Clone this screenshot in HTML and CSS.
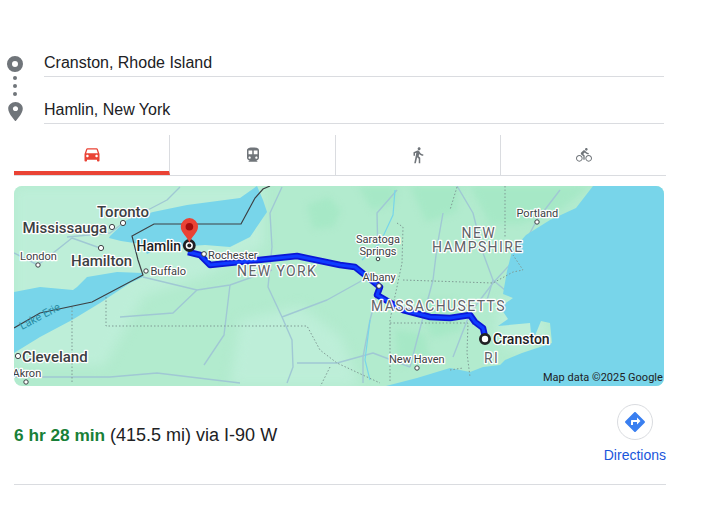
FILE: index.html
```html
<!DOCTYPE html>
<html lang="en">
<head>
  <meta charset="UTF-8" />
  <meta name="viewport" content="width=device-width, initial-scale=1.0" />
  <title>Cranston to Hamlin</title>
  <link rel="stylesheet" href="styles.css">
</head>
<body>
  <div class="route">
    <div class="route-icons">
      <span class="ring"></span>
      <span class="dot"></span>
      <span class="dot"></span>
      <span class="dot"></span>
      <svg class="pin" viewBox="0 0 24 24" preserveAspectRatio="none"><path d="M12 2C8.13 2 5 5.13 5 9c0 5.25 7 13 7 13s7-7.75 7-13c0-3.87-3.13-7-7-7zm0 9.5c-1.38 0-2.5-1.12-2.5-2.5s1.12-2.5 2.5-2.5 2.5 1.12 2.5 2.5-1.12 2.5-2.5 2.5z"/></svg>
    </div>
    <div class="route-fields">
      <div class="field">Cranston, Rhode Island</div>
      <div class="field">Hamlin, New York</div>
    </div>
  </div>

  <div class="tabs">
    <div class="tab active">
      <svg class="tab-icon" viewBox="0 0 24 24"><path d="M18.92 6.01C18.72 5.42 18.16 5 17.5 5h-11c-.66 0-1.21.42-1.42 1.01L3 12v8c0 .55.45 1 1 1h1c.55 0 1-.45 1-1v-1h12v1c0 .55.45 1 1 1h1c.55 0 1-.45 1-1v-8l-2.08-5.99zM6.5 16c-.83 0-1.5-.67-1.5-1.5S5.67 13 6.5 13s1.5.67 1.5 1.5S7.33 16 6.5 16zm11 0c-.83 0-1.5-.67-1.5-1.5s.67-1.5 1.5-1.5 1.5.67 1.5 1.5-.67 1.5-1.5 1.5zM5 11l1.5-4.5h11L19 11H5z"/></svg>
    </div>
    <div class="tab">
      <svg class="tab-icon" viewBox="0 0 24 24"><path d="M12 2c-4.42 0-8 .5-8 4v9.5C4 17.43 5.57 19 7.5 19L6 20.5v.5h12v-.5L16.5 19c1.93 0 3.5-1.57 3.5-3.5V6c0-3.5-3.58-4-8-4zM7.5 17c-.83 0-1.5-.67-1.5-1.5S6.67 14 7.5 14s1.5.67 1.5 1.5S8.33 17 7.5 17zm3.5-6H6V6h5v5zm5.5 6c-.83 0-1.5-.67-1.5-1.5s.67-1.5 1.5-1.5 1.5.67 1.5 1.5-.67 1.5-1.5 1.5zm1.5-6h-5V6h5v5z"/></svg>
    </div>
    <div class="tab">
      <svg class="tab-icon" viewBox="0 0 24 24"><path d="M13.5 5.5c1.1 0 2-.9 2-2s-.9-2-2-2-2 .9-2 2 .9 2 2 2zM9.8 8.9L7 23h2.1l1.8-8 2.1 2v6h2v-7.5l-2.1-2 .6-3C14.8 12 16.8 13 19 13v-2c-1.9 0-3.5-1-4.3-2.4l-1-1.6c-.4-.6-1-1-1.7-1-.3 0-.5.1-.8.1L6 8.3V13h2V9.6l1.8-.7"/></svg>
    </div>
    <div class="tab">
      <svg class="tab-icon bike" viewBox="0 0 24 24"><path d="M15.5 5.5c1.1 0 2-.9 2-2s-.9-2-2-2-2 .9-2 2 .9 2 2 2zM5 12c-2.8 0-5 2.2-5 5s2.2 5 5 5 5-2.2 5-5-2.2-5-5-5zm0 8.5c-1.9 0-3.5-1.6-3.5-3.5s1.6-3.5 3.5-3.5 3.5 1.6 3.5 3.5-1.6 3.5-3.5 3.5zm5.8-10l2.4-2.4.8.8c1.3 1.3 3 2.1 5.1 2.1V9c-1.5 0-2.7-.6-3.6-1.5l-1.9-1.9c-.5-.4-1-.6-1.6-.6s-1.1.2-1.4.6L7.8 8.4c-.4.4-.6.9-.6 1.4 0 .6.2 1.1.6 1.4L11 14v5h2v-6.2l-2.2-2.3zM19 12c-2.8 0-5 2.2-5 5s2.2 5 5 5 5-2.2 5-5-2.2-5-5-5zm0 8.5c-1.9 0-3.5-1.6-3.5-3.5s1.6-3.5 3.5-3.5 3.5 1.6 3.5 3.5-1.6 3.5-3.5 3.5z"/></svg>
    </div>
  </div>

  <!-- map drawn in page coordinates, hence the viewBox offset -->
  <svg class="map" viewBox="14 186 650 200">
    <rect class="land" x="14" y="186" width="650" height="200"/>

    <g class="land-light">
      <path d="M14 186h250v60l-60 30-60 20-40 70H14z"/>
      <path d="M240 320l60-14 40 30 20 50H230z"/>
      <path d="M500 300l30-6 20 40-30 20-24-14z"/>
    </g>
    <g class="land-dark">
      <path d="M307 205l22-8 12 14-8 16-20 2z"/>
      <path d="M358 186h40l-4 18-22 6z"/>
      <path d="M410 186h50l-4 26-30 10z"/>
      <path d="M470 186h120l-30 24-40 14-30 0z"/>
      <path d="M420 300l36 0 6 30-30 8z"/>
      <path d="M395 330l30 4 4 26-30 6z"/>
    </g>

    <g class="roads">
      <path d="M282 187l-12 26 2 34-4 40 14 30 10 23 1 27-6 16"/>
      <path d="M282 317l45-17 36-20"/>
      <path d="M397 190l-20 23 1 44"/>
      <path d="M378 290l-8 30-7 37v26"/>
      <path d="M297 363h40l36-10 37 14"/>
      <path d="M443 213l-6 34-4 33-16 60-7 27"/>
      <path d="M457 186l16 27 10 40 10 27-6 20"/>
      <path d="M560 190l-23 30-20 37-24 26-23 30-17 44"/>
      <path d="M493 280l20 17"/>
      <path d="M14 253l24 12 34-27 28 10"/>
      <path d="M67 237l43-4 13-10 44-23 13-13"/>
      <path d="M14 377h96l47-4 83 10"/>
      <path d="M197 290l-24 23-53 4"/>
      <path d="M143 277l54 13 33-5 42-15"/>
      <path d="M230 285l-6 50-20 30"/>
    </g>

    <path class="water" d="M110 236l17-16 26-8 34-7 53-7 17-12 6 14 4 12-17 25-20 10-25-2-30 2-20 3-8 4-6-10-20-3-12-3z"/>
    <path class="water" d="M14 292l26-5 33 3 4-3 10-10 30-5 26 1v4l-13 6-30 20-28 17-32 17-26 16z"/>
    <path class="water" d="M593 186h71v200H386l31-8 33-10 20 4 13-5 17-2 5-5 17-7 30-10-2-20-9-2-9 22-2-20-32 3 10-7-8-12 13-9-10-4 4-23 5-20 14-16 24-15 26-12z"/>
    <path class="water-line" d="M395 190l-2 25-13 28-18 17"/>
    <path class="water-line" d="M370 320l-5 40 5 20"/>
    <path class="water-line" d="M14 300l14-8"/>

    <g class="border">
      <path d="M14 328l26-15 52-11 51-27-5-15-6-24 22-12h87l14-26 8-9 7-3"/>
    </g>
    <g class="state-line">
      <path d="M72 307v76"/>
      <path d="M106 297v29h201l13 24 17 13 43 20"/>
      <path d="M397 223l6 4-1 36-12 57v63"/>
      <path d="M403 280l90 3 20-11 10-2-10-15"/>
      <path d="M390 323l78 0-1 30 3 24"/>
      <path d="M505 186v51"/>
      <path d="M457 187l-7 23"/>
      <path d="M330 367l-10 20M450 370l13-2"/>
    </g>

    <path class="route-outer" d="M188 252l12 3 10 10 87-9 43 9 15 2 25 20-3 8 26 15 27 7 20 1 20-3 5 7 8 6 2 9"/>
    <path class="route-inner" d="M188 252l12 3 10 10 87-9 43 9 15 2 25 20-3 8 26 15 27 7 20 1 20-3 5 7 8 6 2 9"/>

    <g class="places">
      <circle cx="123" cy="223" r="2.6"/>
      <circle cx="112" cy="227" r="2.6"/>
      <circle cx="101" cy="248" r="2.6"/>
      <circle cx="38" cy="265" r="2.2"/>
      <circle cx="146" cy="271" r="2.2"/>
      <circle cx="18" cy="356" r="2.6"/>
      <circle cx="26" cy="382" r="2.2"/>
      <circle cx="204" cy="254" r="2.4"/>
      <circle cx="378" cy="259" r="1.8"/>
      <circle cx="379" cy="286" r="2.4"/>
      <circle cx="417" cy="368" r="2.2"/>
      <circle cx="537" cy="222" r="2.2"/>
    </g>

    <circle class="stop" cx="189.3" cy="245.5" r="5"/>
    <circle class="stop-center" cx="189.3" cy="245.5" r="2"/>
    <circle class="stop" cx="485" cy="339" r="4.6"/>

    <path class="marker" d="M189.4 243c-2-7-8.6-10-8.6-16.3a8.6 8.6 0 0 1 17.2 0c0 6.3-6.6 9.3-8.6 16.3z"/>
    <circle class="marker-center" cx="189.4" cy="226.7" r="3.8"/>

    <g class="labels">
      <text class="big" x="97" y="217">Toronto</text>
      <text class="big" x="22.5" y="232.5">Mississauga</text>
      <text class="big" x="71" y="266">Hamilton</text>
      <text class="small" x="20" y="259.5">London</text>
      <text class="small" x="150.5" y="275">Buffalo</text>
      <text class="big" x="22" y="362">Cleveland</text>
      <text class="small" x="12.5" y="377">Akron</text>
      <text class="mid" x="136.5" y="251">Hamlin</text>
      <text class="small" x="208" y="258.5">Rochester</text>
      <text class="lake" x="22" y="330" transform="rotate(-28 22 330)">Lake Erie</text>
      <text class="state" x="237" y="275.5">NEW YORK</text>
      <text class="small"><tspan x="356" y="243">Saratoga</tspan><tspan x="359.5" y="255">Springs</tspan></text>
      <text class="small" x="362.5" y="281">Albany</text>
      <text class="state" x="371" y="311">MASSACHUSETTS</text>
      <text class="small" x="389" y="363">New Haven</text>
      <text class="small" x="516.5" y="217">Portland</text>
      <text class="state"><tspan x="461.5" y="238">NEW</tspan><tspan x="432" y="251.5">HAMPSHIRE</tspan></text>
      <text class="mid" x="493" y="344">Cranston</text>
      <text class="state" x="484" y="363">RI</text>
      <text class="credit" x="543" y="381">Map data ©2025 Google</text>
    </g>
  </svg>

  <div class="result">
    <div class="summary"><span class="duration">6 hr 28 min</span> (415.5 mi) via I-90 W</div>
    <div class="directions">
      <span class="directions-btn">
        <svg viewBox="0 0 24 24"><path d="M21.71 11.29l-9-9c-.39-.39-1.02-.39-1.41 0l-9 9c-.39.39-.39 1.02 0 1.41l9 9c.39.39 1.02.39 1.41 0l9-9c.39-.38.39-1.01 0-1.41zM14 14.5V12h-4v3H8v-4c0-.55.45-1 1-1h5V7.5l3.5 3.5-3.5 3.5z"/></svg>
      </span>
      <span class="directions-label">Directions</span>
    </div>
  </div>
</body>
</html>
```

FILE: styles.css
```css
body {
  margin: 0;
  font-family: "Liberation Sans", Arial, sans-serif;
  background-color: white;
  color: #202124;
}

.route {
  display: flex;
  padding-top: 30px;
  width: 664px;
}

.route-icons {
  display: flex;
  flex-direction: column;
  align-items: center;
  width: 30px;
  margin-right: 14px;
  padding-top: 26px;
}

.ring {
  width: 16px;
  height: 16px;
  box-sizing: border-box;
  border: 5px solid #70757a;
  border-radius: 50%;
  margin-bottom: 4px;
}

.dot {
  width: 4px;
  height: 4px;
  background-color: #70757a;
  border-radius: 50%;
  margin-bottom: 4px;
}

.pin {
  width: 25px;
  height: 23px;
  fill: #70757a;
}

.route-fields {
  flex: 1;
}

.field {
  height: 47px;
  box-sizing: border-box;
  display: flex;
  align-items: flex-end;
  padding-bottom: 4px;
  font-size: 16px;
  line-height: 18px;
  color: #202124;
  border-bottom: 1px solid #dadce0;
}

.tabs {
  display: grid;
  grid-template-columns: 156px 166px 165px 165px;
  width: 652px;
  height: 41px;
  box-sizing: border-box;
  margin: 11px 0 0 14px;
  border-bottom: 1px solid #dadce0;
}

.tab {
  display: flex;
  align-items: center;
  justify-content: center;
  height: 40px;
  box-sizing: border-box;
  border-right: 1px solid #dadce0;
}

.tab:last-child {
  border-right: none;
}

.tab.active {
  border-bottom: 4px solid #ea4335;
  padding-top: 1px;
}

.tab-icon {
  width: 18px;
  height: 18px;
  fill: #70757a;
}

.tab-icon.bike {
  width: 16px;
  height: 16px;
}

.tab.active .tab-icon {
  width: 20px;
  height: 20px;
  fill: #ea4335;
}

.map {
  display: block;
  width: 650px;
  height: 200px;
  margin: 10px 0 0 14px;
  border-radius: 8px;
}

.land {
  fill: #b2ebce;
}

.land-light path {
  fill: #bdeed8;
  filter: blur(6px);
}

.land-dark path {
  fill: #a6e8c6;
  filter: blur(3px);
}

.water {
  fill: #78d5ea;
}

.water-line {
  fill: none;
  stroke: #78d5ea;
  stroke-width: 1.2;
}

.roads path {
  fill: none;
  stroke: #a0c8d4;
  stroke-width: 1.4;
  stroke-linejoin: round;
}

.border path {
  fill: none;
  stroke: #3c4043;
  stroke-width: 1.2;
}

.state-line path {
  fill: none;
  stroke: #7f9a94;
  stroke-width: 1;
  stroke-dasharray: 1.5 2;
}

.route-outer,
.route-inner {
  fill: none;
  stroke-linejoin: round;
}

.route-outer {
  stroke: #0b16d6;
  stroke-width: 6.5;
}

.route-inner {
  stroke: #0f3cff;
  stroke-width: 3;
}

.places circle {
  fill: white;
  stroke: #3c4043;
  stroke-width: 1;
}

.stop {
  fill: white;
  stroke: #202124;
  stroke-width: 2.8;
}

.stop-center {
  fill: #202124;
}

.marker {
  fill: #ea4335;
}

.marker-center {
  fill: #a50e0e;
}

.labels text {
  font-family: Roboto, "Liberation Sans", sans-serif;
  fill: #3c4043;
  stroke: white;
  stroke-width: 2.5px;
  stroke-linejoin: round;
  paint-order: stroke;
}

.labels .big {
  font-size: 15px;
  font-weight: 500;
}

.labels .mid {
  font-size: 14px;
  font-weight: 500;
  fill: #202124;
}

.labels .small {
  font-size: 11px;
}

.labels .lake {
  font-size: 11px;
  fill: #2a8ea6;
  stroke: none;
}

.labels .state {
  font-size: 14px;
  letter-spacing: 1.4px;
  fill: #5f6368;
}

.labels .credit {
  font-size: 11px;
  fill: #202124;
  stroke: none;
}

.result {
  display: flex;
  justify-content: space-between;
  width: 652px;
  height: 99px;
  box-sizing: border-box;
  margin-left: 14px;
  padding-top: 18px;
  border-bottom: 1px solid #dadce0;
}

.summary {
  padding-top: 21px;
  font-size: 18px;
  line-height: 20px;
  color: #202124;
}

.duration {
  font-size: 17.25px;
  font-weight: bold;
  color: #188038;
}

.directions {
  display: flex;
  flex-direction: column;
  align-items: center;
}

.directions-btn {
  display: flex;
  align-items: center;
  justify-content: center;
  width: 36px;
  height: 36px;
  box-sizing: border-box;
  border: 1px solid #dadce0;
  border-radius: 50%;
}

.directions-btn svg {
  width: 24px;
  height: 24px;
  fill: #3a7ff0;
}

.directions-label {
  margin-top: 7px;
  font-size: 14px;
  line-height: 16px;
  color: #1a56db;
}
```
